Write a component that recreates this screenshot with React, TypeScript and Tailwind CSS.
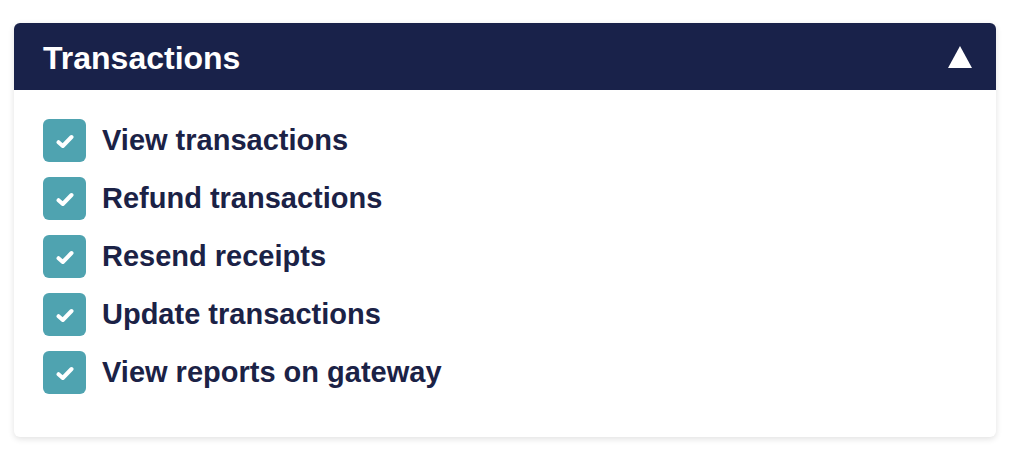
import React from "react";

const items = [
  "View transactions",
  "Refund transactions",
  "Resend receipts",
  "Update transactions",
  "View reports on gateway",
];

export default function App() {
  return (
    <div className="w-[1024px] h-[455px] bg-white pt-[23px] pl-[14px]" style={{ fontFamily: '"Liberation Sans", Arial, sans-serif' }}>
      <div className="w-[982px] h-[414px] rounded-[6px] bg-white shadow-[0_2px_6px_rgba(0,0,0,0.12)] overflow-hidden">
        <div className="h-[67px] bg-[#19224a] flex items-center justify-between pl-[29px] pr-[24px]">
          <span className="text-white font-bold text-[32px] leading-none pt-[2px]">Transactions</span>
          <svg width="24" height="22" viewBox="0 0 24 22">
            <polygon points="12,0 24,22 0,22" fill="#ffffff" />
          </svg>
        </div>
        <div className="flex flex-col gap-[15px] pt-[29px] pl-[29px]">
          {items.map((t) => (
            <div key={t} className="flex items-center gap-[16px]">
              <div className="w-[43px] h-[43px] rounded-[6px] bg-[#4fa3b0] flex items-center justify-center">
                <svg width="18" height="15" viewBox="0 0 18 15" className="mt-[1px]">
                  <path d="M2.5 8.2 L6.8 12 L15.5 3" stroke="#fff" strokeWidth="4" fill="none" strokeLinecap="round" strokeLinejoin="round" />
                </svg>
              </div>
              <span className="text-[#1b2246] font-bold text-[29px] leading-none">{t}</span>
            </div>
          ))}
        </div>
      </div>
    </div>
  );
}
